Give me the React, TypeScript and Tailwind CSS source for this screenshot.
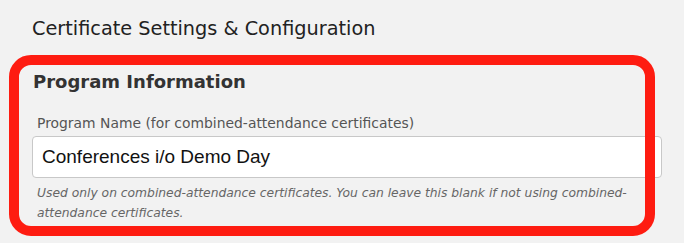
import React from 'react';

const sans = "font-['DejaVu_Sans',sans-serif]";

export default function App() {
  return (
    <div className={`min-h-screen w-full bg-[#f2f2f2] pl-[32px] pr-[22px] pt-[14px] ${sans}`}>
      <h1 className="text-[19.3px] leading-[30px] text-[#222]">Certificate Settings &amp; Configuration</h1>

      <section className="relative mt-[26px]">
        <h2 className="pl-px text-[18px] font-bold leading-[24px] text-[#333]">Program Information</h2>

        <label htmlFor="program-name" className="mt-[20px] block pl-[5px] text-[13.9px] leading-[18px] text-[#555]">
          Program Name (for combined-attendance certificates)
        </label>
        <input
          id="program-name"
          defaultValue="Conferences i/o Demo Day"
          className="mt-[4px] block h-[42px] w-full rounded-[4px] border border-[#c8c8c8] bg-white px-[9px] font-['Liberation_Sans',Arial,sans-serif] text-[19px] text-[#111] outline-none"
        />
        <p className="mt-[5px] pl-[5px] pr-[20px] text-[12.3px] italic leading-[20px] text-[#666]">
          Used only on combined-attendance certificates. You can leave this blank if not using combined-attendance certificates.
        </p>

        {/* red highlight drawn over the panel */}
        <div className="pointer-events-none absolute left-[-23px] right-[7px] top-[-15px] bottom-[-13px] rounded-[22px] border-[10px] border-[#fe1c11]" />
      </section>
    </div>
  );
}
